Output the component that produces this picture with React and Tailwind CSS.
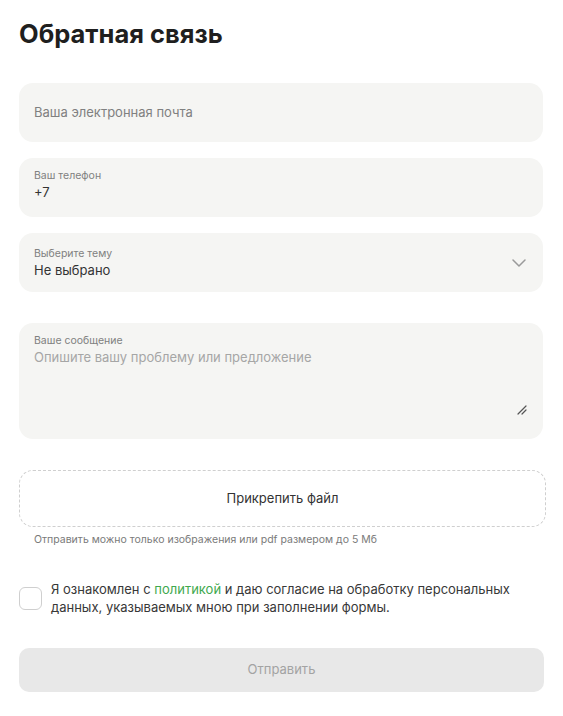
import React from "react";

export default function App() {
  return (
    <div className="min-h-screen bg-white px-[19px] pt-[17px] text-[#222]" style={{ fontFamily: "Inter, 'Noto Sans', sans-serif" }}>
      <h1 className="text-[25.5px] font-bold leading-[33px] text-[#1f1f1f]">Обратная связь</h1>

      <div className="mt-[33px] mr-[1px] flex flex-col gap-4">
        <div className="flex h-[59px] items-center rounded-[14px] bg-[#f5f5f3] px-[15px]">
          <span className="text-[13px] text-[#808080]">Ваша электронная почта</span>
        </div>

        <div className="flex h-[59px] flex-col rounded-[14px] bg-[#f5f5f3] px-[15px] pt-[11px]">
          <span className="text-[10.5px] leading-[14px] text-[#808080]">Ваш телефон</span>
          <span className="mt-[1px] text-[13px] leading-[17px] text-[#333]">+7</span>
        </div>

        <div className="flex h-[59px] items-start justify-between rounded-[14px] bg-[#f5f5f3] pl-[15px] pr-[17px] pt-[14px]">
          <div className="flex flex-col">
            <span className="text-[10.5px] leading-[14px] text-[#808080]">Выберите тему</span>
            <span className="mt-[1px] text-[13px] leading-[17px] text-[#333]">Не выбрано</span>
          </div>
          <svg width="14" height="8" viewBox="0 0 14 8" fill="none" className="mt-[12px]">
            <path d="M1 1l6 6 6-6" stroke="#9a9a9a" strokeWidth="1.5" strokeLinecap="round" strokeLinejoin="round" />
          </svg>
        </div>

        <div className="relative mt-[15px] h-[116px] rounded-[14px] bg-[#f5f5f3] px-[15px] pt-[11px]">
          <div className="text-[10.5px] leading-[14px] text-[#808080]">Ваше сообщение</div>
          <div className="mt-[1px] text-[13px] leading-[17px] text-[#a6a6a6]">Опишите вашу проблему или предложение</div>
          <svg width="10" height="10" viewBox="0 0 10 10" className="absolute right-[16px] bottom-[24px]">
            <path d="M1 9L9 1M5 9L9 5" stroke="#555" strokeWidth="1.2" strokeLinecap="round" />
          </svg>
        </div>
      </div>

      <div className="mt-[31px] -mr-[2px] flex h-[57px] items-center justify-center rounded-[14px] border border-dashed border-[#cfcfcf] text-[13px] text-[#333]">
        Прикрепить файл
      </div>
      <div className="mt-[6px] pl-[15px] text-[10.5px] leading-[14px] text-[#7a7a7a]">
        Отправить можно только изображения или pdf размером до 5 Мб
      </div>

      <div className="mt-[33px] flex items-center gap-[9px]">
        <div className="h-[23px] w-[23px] shrink-0 rounded-[6px] border border-[#cfcfcf] bg-white" />
        <p className="text-[13px] leading-[18px] text-[#383838]">
          Я ознакомлен с <span className="text-[#3fa94e]">политикой</span> и даю согласие на обработку персональных данных, указываемых мною при заполнении формы.
        </p>
      </div>

      <button className="mt-[32px] flex h-[44px] w-full items-center justify-center rounded-[10px] bg-[#e8e8e8] text-[13px] text-[#a3a3a3]">
        Отправить
      </button>
    </div>
  );
}
